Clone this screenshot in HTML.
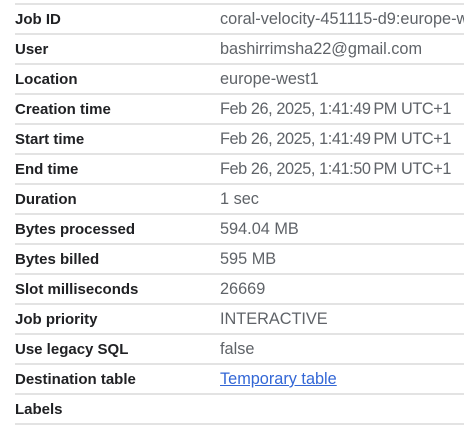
<html><head><style>
body{margin:0;background:#fff;font-family:"Liberation Sans",sans-serif;font-size:15px;overflow:hidden;width:464px;height:433px}
.t{position:absolute;left:15px;top:3px;width:449px;overflow:hidden}
.r{height:28px;border-top:2px solid #e3e3e3;position:relative;white-space:nowrap;overflow:hidden}
.r:last-child{border-bottom:2px solid #e3e3e3}
.k{position:absolute;left:0;top:6px;font-weight:bold;color:#202124}
.v{position:absolute;left:205px;top:5px;color:#5f6368;font-size:16.3px}
.d{letter-spacing:-0.42px}
a{color:#3367d6;text-decoration:underline}
</style></head><body><div class="t">
<div class="r"><span class="k">Job ID</span><span class="v">coral-velocity-451115-d9:europe-west1</span></div>
<div class="r"><span class="k">User</span><span class="v">bashirrimsha22@gmail.com</span></div>
<div class="r"><span class="k">Location</span><span class="v">europe-west1</span></div>
<div class="r"><span class="k">Creation time</span><span class="v d">Feb 26, 2025, 1:41:49&#8239;PM UTC+1</span></div>
<div class="r"><span class="k">Start time</span><span class="v d">Feb 26, 2025, 1:41:49&#8239;PM UTC+1</span></div>
<div class="r"><span class="k">End time</span><span class="v d">Feb 26, 2025, 1:41:50&#8239;PM UTC+1</span></div>
<div class="r"><span class="k">Duration</span><span class="v">1 sec</span></div>
<div class="r"><span class="k">Bytes processed</span><span class="v">594.04 MB</span></div>
<div class="r"><span class="k">Bytes billed</span><span class="v">595 MB</span></div>
<div class="r"><span class="k">Slot milliseconds</span><span class="v">26669</span></div>
<div class="r"><span class="k">Job priority</span><span class="v">INTERACTIVE</span></div>
<div class="r"><span class="k">Use legacy SQL</span><span class="v">false</span></div>
<div class="r"><span class="k">Destination table</span><span class="v"><a>Temporary table</a></span></div>
<div class="r"><span class="k">Labels</span></div>
</div></body></html>
